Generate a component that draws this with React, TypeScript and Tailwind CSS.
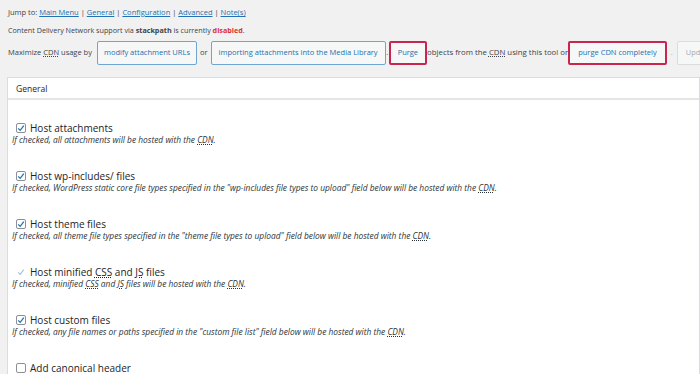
import React from "react";

const Abbr = ({ children }: { children: React.ReactNode }) => (
  <span className="underline decoration-dotted underline-offset-[1px]">{children}</span>
);

const Btn = ({ children, red, px }: { children: React.ReactNode; red?: boolean; px?: string }) => (
  <span
    className={
      "inline-flex items-center h-[24px] rounded-[2px] bg-[#f6f7f7] text-[#2271b1] " +
      (px ?? "px-[8px]") +
      " " +
      (red ? "border-2 border-[#c8254f]" : "border border-[#6fa6d1]")
    }
  >
    {children}
  </span>
);

type Item = { title: React.ReactNode; desc: React.ReactNode; state: "on" | "faint" | "off" };

const Check = ({ state }: { state: Item["state"] }) => {
  if (state === "faint")
    return (
      <span className="w-[10px] h-[10px] flex items-center justify-center">
        <svg width="8" height="8" viewBox="0 0 10 10">
          <path d="M1.5 5.5 L4 8 L8.5 2" fill="none" stroke="#9ec2e0" strokeWidth="1.4" />
        </svg>
      </span>
    );
  return (
    <span className="w-[10px] h-[10px] border border-[#8c8f94] rounded-[2px] bg-white flex items-center justify-center">
      {state === "on" && (
        <svg width="8" height="8" viewBox="0 0 10 10">
          <path d="M1.5 5.5 L4 8 L8.5 2" fill="none" stroke="#2271b1" strokeWidth="1.6" />
        </svg>
      )}
    </span>
  );
};

const items: Item[] = [
  {
    title: "Host attachments",
    desc: (
      <>
        If checked, all attachments will be hosted with the <Abbr>CDN</Abbr>.
      </>
    ),
    state: "on",
  },
  {
    title: "Host wp-includes/ files",
    desc: (
      <>
        If checked, WordPress static core file types specified in the "wp-includes file types to upload" field below
        will be hosted with the <Abbr>CDN</Abbr>.
      </>
    ),
    state: "on",
  },
  {
    title: "Host theme files",
    desc: (
      <>
        If checked, all theme file types specified in the "theme file types to upload" field below will be hosted with
        the <Abbr>CDN</Abbr>.
      </>
    ),
    state: "on",
  },
  {
    title: (
      <>
        Host minified <Abbr>CSS</Abbr> and <Abbr>JS</Abbr> files
      </>
    ),
    desc: (
      <>
        If checked, minified <Abbr>CSS</Abbr> and <Abbr>JS</Abbr> files will be hosted with the <Abbr>CDN</Abbr>.
      </>
    ),
    state: "faint",
  },
  {
    title: "Host custom files",
    desc: (
      <>
        If checked, any file names or paths specified in the "custom file list" field below will be hosted with the{" "}
        <Abbr>CDN</Abbr>.
      </>
    ),
    state: "on",
  },
];

export default function App() {
  return (
    <div className="w-[700px] h-[374px] overflow-hidden bg-[#f1f1f1] text-[#3c434a] font-['Open_Sans',sans-serif] text-[7.5px] leading-none">
      <div className="pl-[8px] pt-[9px] h-[18px]">
        Jump to:{" "}
        <span className="text-[#2271b1] underline">Main Menu</span> |{" "}
        <span className="text-[#2271b1] underline">General</span> |{" "}
        <span className="text-[#2271b1] underline">Configuration</span> |{" "}
        <span className="text-[#2271b1] underline">Advanced</span> |{" "}
        <span className="text-[#2271b1] underline">Note(s)</span>
      </div>
      <div className="pl-[8px] pt-[9px] h-[23px] text-[7.2px]">
        Content Delivery Network support via <b>stackpath</b> is currently{" "}
        <b className="text-[#dc3232]">disabled</b>.
      </div>
      <div className="pl-[8px] flex items-center h-[24px] whitespace-nowrap">
        <span className="mr-[5px]">
          Maximize <Abbr>CDN</Abbr> usage by
        </span>
        <Btn px="px-[6px]">modify attachment URLs</Btn>
        <span className="mx-[3px]">or</span>
        <Btn px="px-[7px]">importing attachments into the Media Library</Btn>
        <span className="mx-[0.5px]">.</span>
        <Btn red px="px-[7px]">Purge</Btn>
        <span className="text-[7.8px]">
          objects from the <Abbr>CDN</Abbr> using this tool or
        </span>
        <Btn red>purge CDN completely</Btn>
        <span className="mx-[4px] text-[#a7aaad]">.</span>
        <span className="inline-flex items-center h-[24px] px-[8px] rounded-[2px] border border-[#dcdcde] text-[#a7aaad] bg-[#f6f7f7]">
          Update
        </span>
      </div>
      <div className="ml-[7px] mt-[12px] bg-white border border-[#dcdcde] h-[400px]">
        <div className="h-[22px] border-b-2 border-[#e5e5e5] flex items-center pt-[2px] pl-[8px] text-[8.5px] text-[#1d2327]">
          General
        </div>
        <div className="pt-[22px]">
          {items.map((it, i) => (
            <div key={i} className="h-[48px] pl-[4px]">
              <div className="flex items-center gap-[4px] pl-[4px] h-[12px] text-[10px] font-medium text-[#1d2327]">
                <Check state={it.state} />
                <span>{it.title}</span>
              </div>
              <div className="italic text-[8.4px] mt-[2px] text-[#2c3338]">{it.desc}</div>
            </div>
          ))}
          <div className="flex items-center gap-[4px] pl-[8px] h-[12px] text-[10px] font-medium text-[#1d2327]">
            <Check state="off" />
            <span>Add canonical header</span>
          </div>
        </div>
      </div>
    </div>
  );
}
